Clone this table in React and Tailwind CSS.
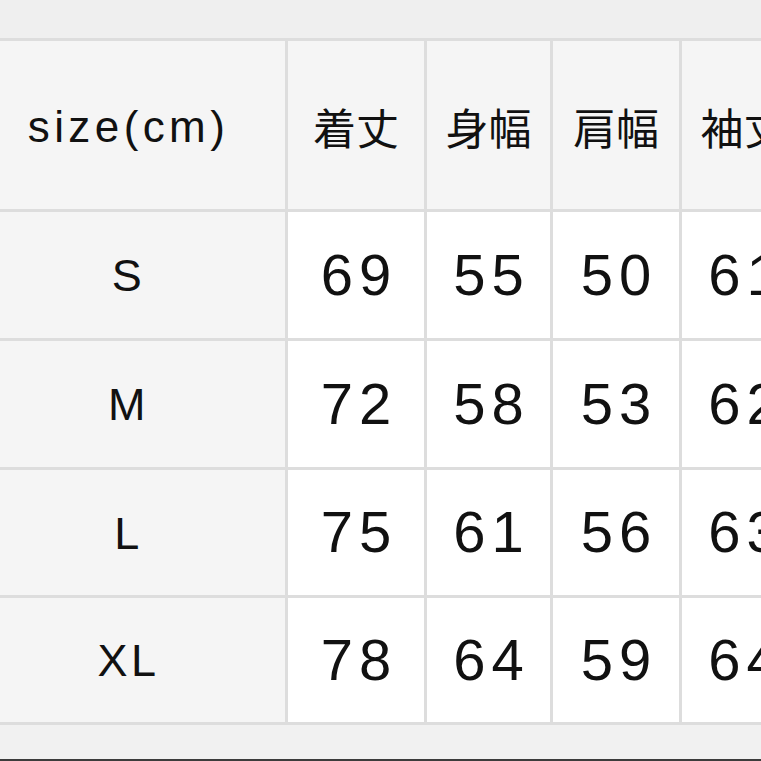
import React from 'react';

const headers = ['着丈', '身幅', '肩幅', '袖丈'];

const rows = [
  { size: 'S', values: [69, 55, 50, 61] },
  { size: 'M', values: [72, 58, 53, 62] },
  { size: 'L', values: [75, 61, 56, 63] },
  { size: 'XL', values: [78, 64, 59, 64] },
];

const rowHeights = ['h-[126px]', 'h-[126px]', 'h-[125px]', 'h-[124px]'];

export default function App() {
  return (
    <div className="w-[761px] h-[761px] overflow-hidden bg-[#efefef] flex flex-col pt-[38px] font-['Liberation_Sans',Arial,'Noto_Sans_CJK_JP',sans-serif] text-[#111]">
      <div className="w-[900px] bg-[#dddddd] py-[3px] grid grid-cols-[285px_136px_123px_126px_123px] gap-[3px]">
        <div className="h-[168px] bg-[#f5f5f5] flex items-center justify-center pr-[28px] pt-[4px] text-[44px] tracking-[0.1em]">
          size(cm)
        </div>
        {headers.map(h => (
          <div
            key={h}
            className="h-[168px] bg-[#f5f5f5] flex items-center justify-center pt-[2px] text-[43px] font-['Noto_Sans_CJK_JP',sans-serif]"
          >
            {h}
          </div>
        ))}

        {rows.map((row, i) => (
          <React.Fragment key={row.size}>
            <div className={`${rowHeights[i]} bg-[#f5f5f5] flex items-center justify-center pr-[28px] pt-[2px] text-[45px] tracking-[0.08em]`}>
              {row.size}
            </div>
            {row.values.map((v, j) => (
              <div
                key={j}
                className={`${rowHeights[i]} bg-white flex items-center justify-center text-[58px] tracking-[0.1em] pl-[0.1em] pb-[2px]`}
              >
                {v}
              </div>
            ))}
          </React.Fragment>
        ))}
      </div>
      <div className="flex-1 bg-[#f1f1f1] border-b-2 border-[#3c3c3c]" />
    </div>
  );
}
